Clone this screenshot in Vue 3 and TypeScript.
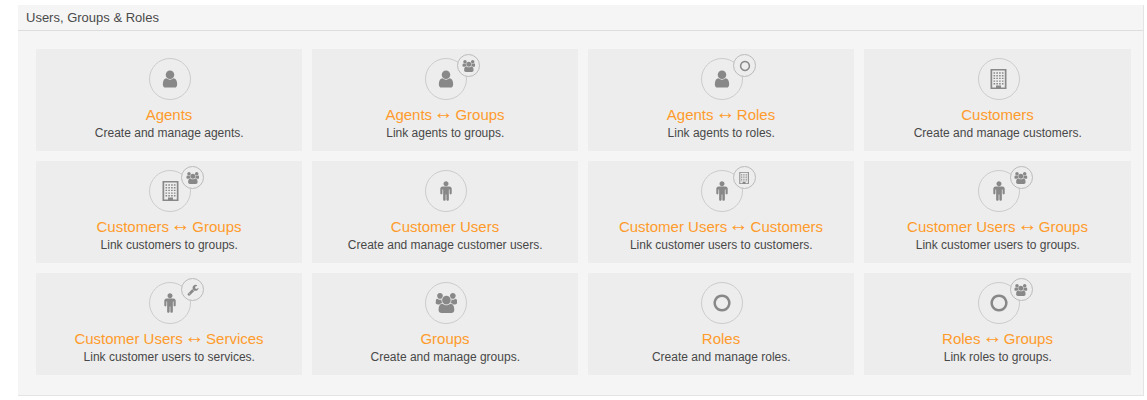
<script setup lang="ts">
type IconName = 'user' | 'group' | 'male' | 'building' | 'circle' | 'wrench'

interface Tile {
  title: string
  linked?: string
  text: string
  icon: IconName
  badge?: IconName
}

interface Shape {
  box: string
  paths: string[]
}

const tiles: Tile[] = [
  { title: 'Agents', text: 'Create and manage agents.', icon: 'user' },
  { title: 'Agents', linked: 'Groups', text: 'Link agents to groups.', icon: 'user', badge: 'group' },
  { title: 'Agents', linked: 'Roles', text: 'Link agents to roles.', icon: 'user', badge: 'circle' },
  { title: 'Customers', text: 'Create and manage customers.', icon: 'building' },
  { title: 'Customers', linked: 'Groups', text: 'Link customers to groups.', icon: 'building', badge: 'group' },
  { title: 'Customer Users', text: 'Create and manage customer users.', icon: 'male' },
  { title: 'Customer Users', linked: 'Customers', text: 'Link customer users to customers.', icon: 'male', badge: 'building' },
  { title: 'Customer Users', linked: 'Groups', text: 'Link customer users to groups.', icon: 'male', badge: 'group' },
  { title: 'Customer Users', linked: 'Services', text: 'Link customer users to services.', icon: 'male', badge: 'wrench' },
  { title: 'Groups', text: 'Create and manage groups.', icon: 'group' },
  { title: 'Roles', text: 'Create and manage roles.', icon: 'circle' },
  { title: 'Roles', linked: 'Groups', text: 'Link roles to groups.', icon: 'circle', badge: 'group' },
]

const windows = [3.5, 6.3, 9.1, 11.9]
  .flatMap((x) => [3.3, 6, 8.7, 11.4, 14.1].map((y) => `M${x} ${y}h1.6v1.4h-1.6z`))
  .join('')

const shapes: Record<IconName, Shape> = {
  user: {
    box: '0 0 1792 1792',
    paths: [
      'M1536 1399q0 109-62.5 187t-150.5 78h-854q-88 0-150.5-78t-62.5-187q0-85 8.5-160.5t31.5-152 58.5-131 94-89 134.5-34.5q131 128 313 128t313-128q76 0 134.5 34.5t94 89 58.5 131 31.5 152 8.5 160.5zm-256-887q0 159-112.5 271.5t-271.5 112.5-271.5-112.5-112.5-271.5 112.5-271.5 271.5-112.5 271.5 112.5 112.5 271.5z',
    ],
  },
  group: {
    box: '0 0 2048 1792',
    paths: [
      'M657 896q-162 5-265 128h-134q-82 0-138-40.5t-56-118.5q0-353 124-353 6 0 43.5 21t97.5 42.5 119 21.5q67 0 133-23-5 37-5 66 0 139 81 256zm1071 637q0 120-73 189.5t-194 69.5h-874q-121 0-194-69.5t-73-189.5q0-53 3.5-103.5t14-109 26.5-108.5 43-97.5 62-81 85.5-53.5 111.5-20q10 0 43 21.5t73 48 107 48 135 21.5 135-21.5 107-48 73-48 43-21.5q61 0 111.5 20t85.5 53.5 62 81 43 97.5 26.5 108.5 14 109 3.5 103.5zm-1024-1277q0 106-75 181t-181 75-181-75-75-181 75-181 181-75 181 75 75 181zm704 384q0 159-112.5 271.5t-271.5 112.5-271.5-112.5-112.5-271.5 112.5-271.5 271.5-112.5 271.5 112.5 112.5 271.5zm576 225q0 78-56 118.5t-138 40.5h-134q-103-123-265-128 81-117 81-256 0-29-5-66 66 23 133 23 59 0 119-21.5t97.5-42.5 43.5-21q124 0 124 353zm-128-609q0 106-75 181t-181 75-181-75-75-181 75-181 181-75 181 75 75 181z',
    ],
  },
  male: {
    box: '-128 144 1792 1792',
    paths: [
      'M1280 832v416q0 40-28 68t-68 28-68-28-28-68v-352h-64v912q0 46-33 79t-79 33-79-33-33-79v-464h-64v464q0 46-33 79t-79 33-79-33-33-79v-912h-64v352q0 40-28 68t-68 28-68-28-28-68v-416q0-80 56-136t136-56h640q80 0 136 56t56 136zm-288-448q0 93-65.5 158.5t-158.5 65.5-158.5-65.5-65.5-158.5 65.5-158.5 158.5-65.5 158.5 65.5 65.5 158.5z',
    ],
  },
  building: {
    box: '0 0 17 20',
    paths: ['M.5 0h16v20h-16zM2.2 1.4v17.2h3.8v-2.2h5v2.2h3.8v-17.2z', windows],
  },
  circle: {
    box: '0 0 1792 1792',
    paths: [
      'M896 352q-148 0-273 73t-198 198-73 273 73 273 198 198 273 73 273-73 198-198 73-273-73-273-198-198-273-73zm768 544q0 209-103 385.5t-279.5 279.5-385.5 103-385.5-103-279.5-279.5-103-385.5 103-385.5 279.5-279.5 385.5-103 385.5 103 279.5 279.5 103 385.5z',
    ],
  },
  wrench: {
    box: '0 0 1792 1792',
    paths: [
      'M448 1472q0-26-19-45t-45-19-45 19-19 45 19 45 45 19 45-19 19-45zm644-420l-682 682q-37 37-90 37-52 0-91-37l-106-108q-38-36-38-90 0-53 38-91l681-681q39 98 114.5 173.5t173.5 114.5zm634-435q0 39-23 106-47 134-164.5 217.5t-258.5 83.5q-185 0-316.5-131.5t-131.5-316.5 131.5-316.5 316.5-131.5q58 0 121.5 16.5t107.5 46.5q16 11 16 28t-16 28l-293 169v224l193 107q5-3 79-48.5t135.5-81 70.5-35.5q15 0 25.5 10t10.5 25z',
    ],
  },
}
</script>

<template>
  <section class="panel">
    <h2 class="header">Users, Groups &amp; Roles</h2>
    <div class="grid">
      <a v-for="tile in tiles" :key="tile.text" class="tile">
        <span class="icon">
          <svg :class="['glyph', tile.icon]" :viewBox="shapes[tile.icon].box">
            <path v-for="d in shapes[tile.icon].paths" :key="d" :d="d" fill-rule="evenodd" />
          </svg>
          <span v-if="tile.badge" class="badge">
            <svg :class="['mini', tile.badge]" :viewBox="shapes[tile.badge].box">
              <path v-for="d in shapes[tile.badge].paths" :key="d" :d="d" fill-rule="evenodd" />
            </svg>
          </span>
        </span>
        <span class="title">{{ tile.title }}<template v-if="tile.linked">&nbsp;<span class="arrow">↔</span>&nbsp;{{ tile.linked }}</template></span>
        <span class="text">{{ tile.text }}</span>
      </a>
    </div>
  </section>
</template>

<style>
body {
  background: #fff;
}
</style>

<style scoped>
.panel {
  box-sizing: border-box;
  width: 1126px;
  height: 391px;
  margin: 5px 0 0 18px;
  background: #f5f5f5;
  border-right: 1px solid #e4e4e4;
  border-bottom: 1px solid #e4e4e4;
  font-family: "Liberation Sans", Arial, sans-serif;
}
.header {
  box-sizing: border-box;
  height: 26px;
  margin: 0;
  padding-left: 8px;
  border-bottom: 1px solid #ddd;
  font-size: 13px;
  font-weight: 400;
  line-height: 25px;
  color: #4a4a4a;
}
.grid {
  display: grid;
  grid-template-columns: 266px 266px 266px 267px;
  grid-auto-rows: 102px;
  gap: 10px;
  padding: 18px 0 0 18px;
}
.tile {
  display: flex;
  flex-direction: column;
  align-items: center;
  box-sizing: border-box;
  padding-top: 9px;
  background: #ededed;
}
.icon {
  position: relative;
  box-sizing: border-box;
  display: flex;
  align-items: center;
  justify-content: center;
  width: 42px;
  height: 42px;
  margin-left: 2px;
  border: 1px solid #ccc;
  border-radius: 50%;
}
.glyph {
  height: 20px;
}
.badge {
  position: absolute;
  top: -5px;
  left: 31px;
  box-sizing: border-box;
  display: flex;
  align-items: center;
  justify-content: center;
  width: 23px;
  height: 23px;
  border: 1px solid #bbb;
  border-radius: 50%;
  background: #ededed;
}
.mini {
  height: 12px;
}
svg {
  display: block;
  fill: #888;
}
.title {
  margin-top: 6px;
  font-size: 15px;
  line-height: 18px;
  color: #ff9b2b;
  white-space: nowrap;
}
.arrow {
  display: inline-block;
  transform: translateY(-2.5px) scale(1.32);
}
.text {
  margin-top: 1px;
  padding-left: 0.5px;
  font-size: 12px;
  line-height: 16px;
  color: #484848;
  white-space: nowrap;
}
</style>
